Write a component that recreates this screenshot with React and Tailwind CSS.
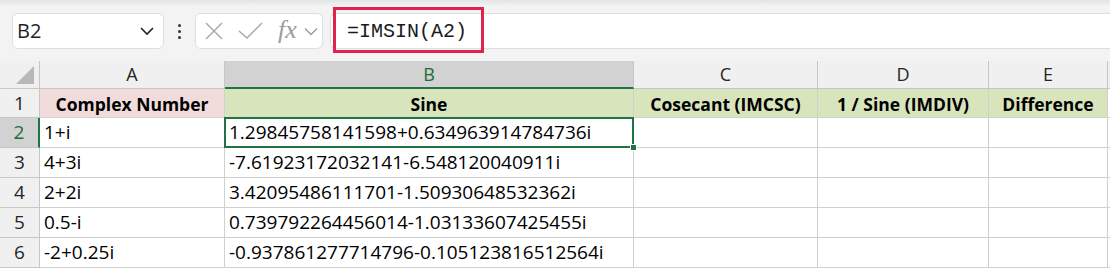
import React from "react";

const cellFont = { fontFamily: '"Open Sans", "Liberation Sans", sans-serif' };

const cols = "grid-cols-[40px_185px_409px_184px_171px_119px_1fr]";

function HeaderCell({ children, selected }) {
  return (
    <div
      className={
        "h-[28px] flex items-center justify-center text-[18px] border-r border-[#c6c6c6] " +
        (selected
          ? "bg-[#d2d2d2] text-[#1e6b3a] border-b-2 border-b-[#217346]"
          : "bg-[#f0f0f0] text-[#262626] border-b border-b-[#c6c6c6]")
      }
    >
      {children}
    </div>
  );
}

function RowHead({ n, selected, h }) {
  return (
    <div
      className={
        "flex items-center justify-center text-[19px] border-b border-[#c6c6c6] " +
        h +
        (selected
          ? " bg-[#d2d2d2] text-[#1e6b3a] border-r-2 border-r-[#217346]"
          : " bg-[#f0f0f0] text-[#262626] border-r border-r-[#c6c6c6]")
      }
    >
      {n}
    </div>
  );
}

function Cell({ children, h, className = "" }) {
  return (
    <div
      className={
        "flex items-center px-[4px] text-[19px] text-black border-r border-b border-[#d0d0d0] whitespace-nowrap overflow-hidden " +
        h +
        " " +
        className
      }
    >
      {children}
    </div>
  );
}

function HeadCell({ children, bg }) {
  return (
    <div
      className={
        "h-[29px] flex items-center justify-center pt-[3px] text-[17.5px] font-bold text-black border-r border-b border-[#d0d0d0] whitespace-nowrap overflow-hidden " +
        bg
      }
    >
      {children}
    </div>
  );
}

const data = [
  ["1+i", "1.29845758141598+0.634963914784736i"],
  ["4+3i", "-7.61923172032141-6.548120040911i"],
  ["2+2i", "3.42095486111701-1.50930648532362i"],
  ["0.5-i", "0.739792264456014-1.03133607425455i"],
  ["-2+0.25i", "-0.937861277714796-0.105123816512564i"],
];

export default function App() {
  return (
    <div className="w-[1110px] h-[269px] overflow-hidden bg-white" style={cellFont}>
      {/* toolbar */}
      <div className="h-[61px] relative flex items-start pt-[13px] pl-[12px] bg-gradient-to-b from-[#e3e4e6] via-[#f3f3f3] via-[10%] to-[#f3f3f3]">
        <div className="w-[152px] h-[36px] bg-white border border-[#dedede] rounded-[6px] flex items-center justify-between pl-[4px] pr-[8px]">
          <span className="text-[20px] text-[#1f1f1f]">B2</span>
          <svg width="16" height="10" viewBox="0 0 16 10" fill="none" stroke="#222" strokeWidth="1.6">
            <path d="M2 2 L8 8 L14 2" />
          </svg>
        </div>
        <div className="w-[31px] h-[36px] flex flex-col items-center justify-center gap-[3px]">
          <span className="w-[3px] h-[3px] bg-[#333] rounded-full" />
          <span className="w-[3px] h-[3px] bg-[#333] rounded-full" />
          <span className="w-[3px] h-[3px] bg-[#333] rounded-full" />
        </div>
        <div className="w-[128px] h-[36px] bg-white border border-[#dedede] rounded-[6px] flex items-center pl-[8px]">
          <svg width="20" height="20" viewBox="0 0 20 20" stroke="#ababab" strokeWidth="1.5" fill="none">
            <path d="M2 2 L18 18 M18 2 L2 18" />
          </svg>
          <svg width="26" height="20" viewBox="0 0 26 20" stroke="#ababab" strokeWidth="1.5" fill="none" className="ml-[14px]">
            <path d="M1 10 L9 17 L24 2" />
          </svg>
          <span
            className="ml-[14px] text-[26px] italic text-[#9c9c9c] leading-none -mt-[2px]"
            style={{ fontFamily: '"Liberation Serif", serif' }}
          >
            fx
          </span>
          <svg width="14" height="9" viewBox="0 0 14 9" fill="none" stroke="#9c9c9c" strokeWidth="1.4" className="ml-[7px]">
            <path d="M1 1.5 L7 7.5 L13 1.5" />
          </svg>
        </div>
        <div className="flex-1 ml-[7px] h-[36px] bg-white border-y border-l border-[#dedede] rounded-l-[6px] relative">
          <div className="absolute left-[2px] top-[-7px] w-[151px] h-[46px] border-[3px] border-[#e0234e]" />
          <span
            className="absolute left-[16px] top-[3px] text-[20px] text-[#1a1a1a]"
            style={{ fontFamily: '"Liberation Mono", "DejaVu Sans Mono", monospace' }}
          >
            =IMSIN(A2)
          </span>
        </div>
      </div>

      {/* grid */}
      <div className={"grid " + cols}>
        <div className="h-[28px] bg-[#f0f0f0] border-r border-b border-[#c6c6c6] relative">
          <svg width="20" height="20" viewBox="0 0 20 20" className="absolute right-[4px] bottom-[3px]">
            <path d="M19 1 L19 19 L1 19 Z" fill="#b8b8b8" />
          </svg>
        </div>
        <HeaderCell>A</HeaderCell>
        <HeaderCell selected>B</HeaderCell>
        <HeaderCell>C</HeaderCell>
        <HeaderCell>D</HeaderCell>
        <HeaderCell>E</HeaderCell>
        <div className="h-[28px] bg-[#f0f0f0] border-b border-[#c6c6c6]" />

        <RowHead n="1" h="h-[29px]" />
        <HeadCell bg="bg-[#f2dcdb]">Complex Number</HeadCell>
        <HeadCell bg="bg-[#d8e4bc]">Sine</HeadCell>
        <HeadCell bg="bg-[#d8e4bc]">Cosecant (IMCSC)</HeadCell>
        <HeadCell bg="bg-[#d8e4bc]">1 / Sine (IMDIV)</HeadCell>
        <HeadCell bg="bg-[#d8e4bc]">Difference</HeadCell>
        <div className="h-[29px] border-b border-[#d0d0d0]" />

        {data.map((r, i) => (
          <React.Fragment key={i}>
            <RowHead n={String(i + 2)} h="h-[30px]" selected={i === 0} />
            <Cell h="h-[30px]">{r[0]}</Cell>
            {i === 0 ? (
              <div className="h-[30px] relative border-r border-b border-[#d0d0d0]">
                <div className="absolute left-[-1px] top-[-1px] right-[-1px] bottom-[-1px] border-2 border-[#217346] flex items-center px-[3px] text-[19px] whitespace-nowrap">
                  {r[1]}
                </div>
                <div className="absolute right-[-4px] bottom-[-4px] w-[7px] h-[7px] bg-[#217346] border border-white" />
              </div>
            ) : (
              <Cell h="h-[30px]">{r[1]}</Cell>
            )}
            <Cell h="h-[30px]" />
            <Cell h="h-[30px]" />
            <Cell h="h-[30px]" />
            <div className="h-[30px] border-b border-[#d0d0d0]" />
          </React.Fragment>
        ))}
      </div>
    </div>
  );
}
